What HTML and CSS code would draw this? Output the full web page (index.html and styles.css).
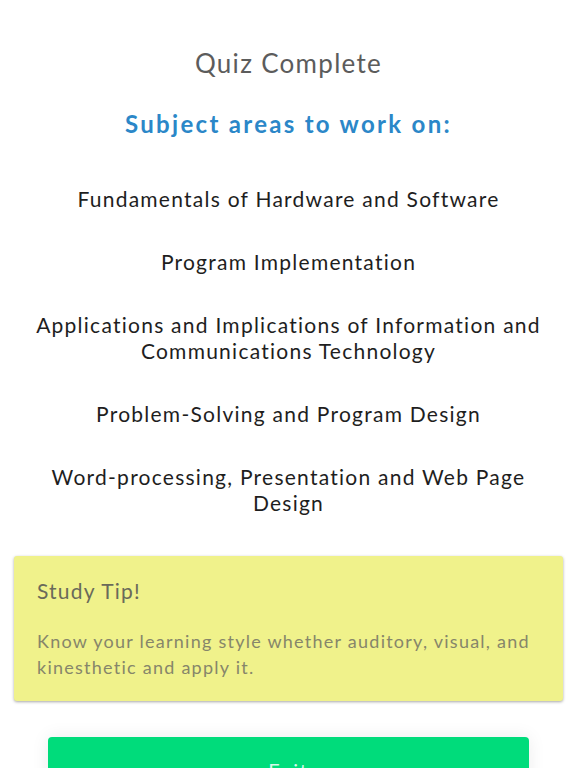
FILE: index.html
```html
<!DOCTYPE html>
<html lang="en">
<head>
<meta charset="utf-8">
<title>Quiz Complete</title>
<link rel="stylesheet" href="styles.css">
</head>
<body>
<main class="page">
  <h1 class="title">Quiz Complete</h1>
  <h2 class="subtitle">Subject areas to work on:</h2>
  <ul class="areas">
    <li>Fundamentals of Hardware and Software</li>
    <li>Program Implementation</li>
    <li>Applications and Implications of Information and Communications Technology</li>
    <li>Problem-Solving and Program Design</li>
    <li>Word-processing, Presentation and Web Page Design</li>
  </ul>
  <section class="tip">
    <h3 class="tip-title">Study Tip!</h3>
    <p class="tip-text">Know your learning style whether auditory, visual, and kinesthetic and apply it.</p>
  </section>
  <div class="actions">
    <button class="exit">Exit</button>
  </div>
</main>
</body>
</html>
```
FILE: styles.css
```css
* { box-sizing: border-box; }
html, body { margin: 0; padding: 0; background: #fff; }
body {
  font-family: Lato, "Open Sans", "Liberation Sans", sans-serif;
  overflow: hidden;
  height: 768px;
}
.page {
  padding: 47px 13px 0 14px;
  display: flex;
  flex-direction: column;
}
.title {
  margin: 0;
  font-size: 26px;
  line-height: 32px;
  font-weight: 400;
  letter-spacing: 1.3px;
  color: #5c5c5c;
  text-align: center;
}
.subtitle {
  margin: 30px 0 0;
  font-size: 24px;
  line-height: 30px;
  font-weight: 700;
  letter-spacing: 2.3px;
  color: #2b87c8;
  text-align: center;
}
.areas {
  list-style: none;
  margin: 47px 0 0;
  padding: 0 8px;
  display: flex;
  flex-direction: column;
  gap: 37px;
}
.areas li {
  font-size: 21px;
  line-height: 26px;
  letter-spacing: 1.25px;
  color: #1e1e1e;
  text-align: center;
}
.tip {
  margin-top: 40px;
  background: #f0f28b;
  border-radius: 3px;
  box-shadow: 0 1px 3px rgba(0,0,0,0.35);
  padding: 22px 23px 21px;
}
.tip-title {
  margin: 0;
  font-size: 21px;
  line-height: 26px;
  font-weight: 400;
  letter-spacing: 1.2px;
  color: #6a6a5a;
}
.tip-text {
  margin: 24px 0 0;
  font-size: 18px;
  line-height: 26px;
  letter-spacing: 1.25px;
  color: #86866a;
}
.actions {
  margin-top: 36px;
  padding: 0 34px;
}
.exit {
  display: block;
  width: 100%;
  border: none;
  border-radius: 4px;
  background: #00dc7b;
  color: rgba(255,255,255,0.85);
  font-family: inherit;
  font-size: 20px;
  line-height: 26px;
  letter-spacing: 1.7px;
  padding: 20px 0;
  box-shadow: 0 0 18px rgba(0,0,0,0.08);
}
```
